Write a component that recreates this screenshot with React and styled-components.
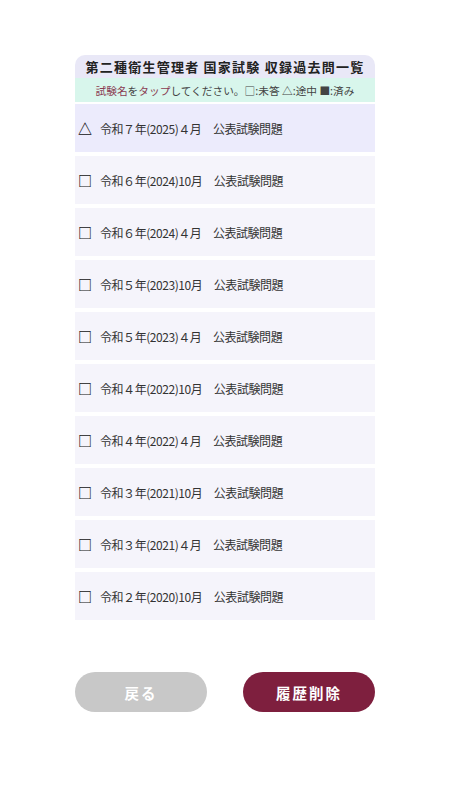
import React from 'react';
import styled, { createGlobalStyle } from 'styled-components';

const Global = createGlobalStyle`
  body {
    margin: 0;
    background: #ffffff;
    font-family: 'Noto Sans CJK JP', 'Noto Sans', sans-serif;
  }
`;

const exams = [
  { label: '令和７年(2025)４月', status: 'doing' },
  { label: '令和６年(2024)10月', status: 'todo' },
  { label: '令和６年(2024)４月', status: 'todo' },
  { label: '令和５年(2023)10月', status: 'todo' },
  { label: '令和５年(2023)４月', status: 'todo' },
  { label: '令和４年(2022)10月', status: 'todo' },
  { label: '令和４年(2022)４月', status: 'todo' },
  { label: '令和３年(2021)10月', status: 'todo' },
  { label: '令和３年(2021)４月', status: 'todo' },
  { label: '令和２年(2020)10月', status: 'todo' },
];

const marks = { todo: '□', doing: '△', done: '■' };

const App = () => {
  return (
    <Page>
      <Global />
      <Card>
        <Title>第二種衛生管理者 国家試験 収録過去問一覧</Title>
        <Hint>
          <Accent>試験名</Accent>を<Accent>タップ</Accent>してください。□:未答 △:途中 ■:済み
        </Hint>
        <List>
          {exams.map((exam) => (
            <Row key={exam.label} active={exam.status === 'doing'}>
              <Mark>{marks[exam.status]}</Mark>
              <Label>
                {exam.label}　公表試験問題
              </Label>
            </Row>
          ))}
        </List>
      </Card>
      <Buttons>
        <Button>戻る</Button>
        <Button primary>履歴削除</Button>
      </Buttons>
    </Page>
  );
};

const Page = styled.div`
  width: 300px;
  margin: 0 auto;
  padding-top: 55px;
`;

const Card = styled.div`
  display: flex;
  flex-direction: column;
`;

const Title = styled.div`
  height: 23px;
  display: flex;
  align-items: center;
  justify-content: center;
  background: #e9e8f7;
  border-radius: 10px 10px 0 0;
  font-size: 13px;
  font-weight: 700;
  letter-spacing: 1.25px;
  color: #222;
`;

const Hint = styled.div`
  height: 24px;
  display: flex;
  align-items: center;
  justify-content: center;
  background: #d8f6ec;
  font-size: 10.7px;
  color: #444;
`;

const Accent = styled.span`
  color: #8a3b52;
`;

const List = styled.div`
  display: flex;
  flex-direction: column;
  gap: 4px;
  padding-top: 2px;
`;

const Row = styled.div`
  height: 48px;
  display: flex;
  align-items: center;
  padding-left: 3px;
  background: ${(p) => (p.active ? '#ecebfc' : '#f5f4fb')};
  color: #333;
  font-size: 12px;
`;

const Mark = styled.span`
  width: 22px;
  font-size: 14px;
  font-weight: 700;
  color: #111;
`;

const Label = styled.span`
  letter-spacing: -0.45px;
`;

const Buttons = styled.div`
  display: flex;
  justify-content: space-between;
  margin-top: 52px;
`;

const Button = styled.button`
  width: 132px;
  height: 40px;
  border: none;
  border-radius: 20px;
  background: ${(p) => (p.primary ? '#7e1f3e' : '#c8c8c8')};
  color: #ffffff;
  font-family: 'Noto Sans CJK JP', 'Noto Sans', sans-serif;
  font-size: 14.5px;
  font-weight: 700;
  letter-spacing: 2px;
`;

export default App;
